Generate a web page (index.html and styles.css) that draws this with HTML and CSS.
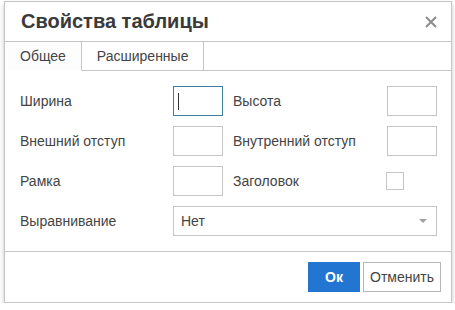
FILE: index.html
```html
<!DOCTYPE html>
<html lang="ru">
<head>
<meta charset="utf-8">
<title>Свойства таблицы</title>
<link rel="stylesheet" href="styles.css">
</head>
<body>
<div class="dialog">
  <div class="head">
    <div class="title">Свойства таблицы</div>
    <svg class="close" width="12" height="12" viewBox="0 0 12 12"><path d="M1 1 L11 11 M11 1 L1 11" stroke="#8c8c8c" stroke-width="2" fill="none"/></svg>
  </div>
  <div class="tabs">
    <div class="tab active">Общее</div>
    <div class="tab">Расширенные</div>
    <div class="tabfill"></div>
  </div>
  <div class="form">
    <div class="label">Ширина</div>
    <div class="input focus"><span class="caret"></span></div>
    <div class="label">Высота</div>
    <div class="input"></div>

    <div class="label">Внешний отступ</div>
    <div class="input"></div>
    <div class="label">Внутренний отступ</div>
    <div class="input"></div>

    <div class="label">Рамка</div>
    <div class="input"></div>
    <div class="label">Заголовок</div>
    <div class="checkcell"><div class="check"></div></div>

    <div class="label">Выравнивание</div>
    <div class="select"><span>Нет</span><span class="arrow"></span></div>
  </div>
  <div class="foot">
    <div class="btn primary">Ок</div>
    <div class="btn">Отменить</div>
  </div>
</div>
</body>
</html>
```
FILE: styles.css
```css
html, body {
  margin: 0;
  padding: 0;
  background: #fff;
}
body {
  font-family: "Liberation Sans", Arial, sans-serif;
  font-size: 14px;
  color: #444;
}
.dialog {
  margin: 1px 0 0 4px;
  width: 446px;
  border: 1px solid #c5c5c5;
  box-shadow: 0 3px 5px rgba(0,0,0,0.22);
  background: #fff;
}
.head {
  height: 39px;
  border-bottom: 1px solid #c5c5c5;
  display: flex;
  align-items: center;
  justify-content: space-between;
  padding: 0 14px 0 16px;
}
.title {
  font-size: 20px;
  font-weight: bold;
  color: #3a3a3a;
  margin-top: -1px;
}
.close {
  display: block;
}
.tabs {
  display: flex;
  height: 29px;
}
.tab {
  padding: 0 15px;
  line-height: 29px;
  border-right: 1px solid #c5c5c5;
  border-bottom: 1px solid #c5c5c5;
  color: #444;
  background: #fff;
}
.tab.active {
  border-bottom-color: transparent;
  background: #fdfdfd;
}
.tabfill {
  flex: 1;
  border-bottom: 1px solid #c5c5c5;
}
.form {
  display: grid;
  grid-template-columns: 143px 50px 144px 50px;
  grid-auto-rows: 30px;
  column-gap: 10px;
  row-gap: 10px;
  padding: 15px 14px 15px 15px;
  border-bottom: 1px solid #c5c5c5;
}
.label {
  display: flex;
  align-items: center;
  color: #444;
}
.input {
  border: 1px solid #c5c5c5;
  box-sizing: border-box;
  display: flex;
  align-items: center;
  padding-left: 4px;
}
.input.focus {
  border-color: #3b7f9c;
}
.caret {
  width: 1px;
  height: 17px;
  background: #333;
}
.checkcell {
  display: flex;
  align-items: center;
}
.check {
  width: 18px;
  height: 18px;
  box-sizing: border-box;
  border: 1px solid #c5c5c5;
  margin-left: -1px;
}
.select {
  grid-column: 2 / 5;
  border: 1px solid #c5c5c5;
  box-sizing: border-box;
  display: flex;
  align-items: center;
  justify-content: space-between;
  padding: 0 9px 0 7px;
}
.arrow {
  width: 0;
  height: 0;
  border-left: 4px solid transparent;
  border-right: 4px solid transparent;
  border-top: 4px solid #a0a0a0;
}
.foot {
  display: flex;
  justify-content: flex-end;
  gap: 3px;
  padding: 10px 10px 10px 0;
}
.btn {
  height: 30px;
  box-sizing: border-box;
  border: 1px solid #b5b5b5;
  padding: 0 6px;
  line-height: 28px;
  color: #444;
  background: #fff;
}
.btn.primary {
  width: 52px;
  text-align: center;
  background: #2276d2;
  border-color: #2276d2;
  color: #fff;
  font-weight: bold;
}
```
